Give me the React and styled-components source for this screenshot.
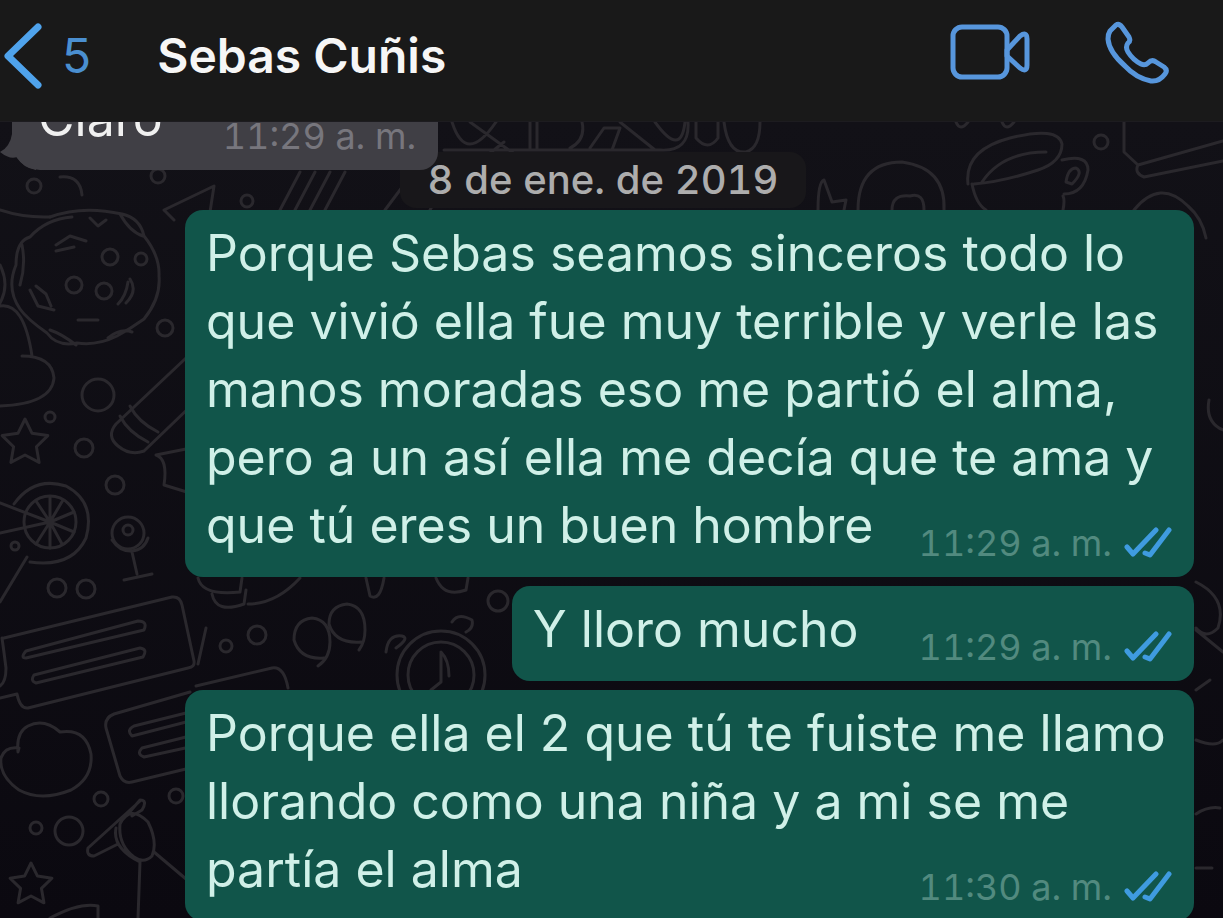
import React from "react";
import styled, { createGlobalStyle } from "styled-components";

const Global = createGlobalStyle`
  * { box-sizing: border-box; }
  html, body { margin: 0; background: #0d0b11; }
  body { font-family: Inter, "Liberation Sans", sans-serif; color: #fff; }
`;

const Screen = styled.div`
  height: 100vh;
  display: flex;
  flex-direction: column;
  overflow: hidden;
`;

const Header = styled.header`
  position: relative;
  z-index: 2;
  flex: none;
  height: 122px;
  padding: 0 54px 10px 4px;
  display: flex;
  align-items: center;
  background: #191919;
  border-bottom: 1px solid #1d1c20;
`;

const HeaderButton = styled.button`
  display: flex;
  align-items: center;
  gap: 20px;
  padding: 0;
  border: 0;
  background: none;
  color: #4a8fd0;
  font: inherit;
  font-size: 48px;
  line-height: 68px;
  cursor: pointer;

  svg { display: block; }
`;

const Title = styled.h1`
  flex: 1;
  margin: 0 0 0 66px;
  font-size: 48px;
  font-weight: 600;
  line-height: 68px;
  color: #f6f6f6;
`;

const Actions = styled.div`
  display: flex;
  gap: 74px;
  padding-bottom: 6px;
`;

const Chat = styled.main`
  position: relative;
  flex: 1;
  min-height: 0;
  background: linear-gradient(#121117, #0b0910);
`;

const Wallpaper = styled.svg`
  position: absolute;
  inset: 0;
  width: 100%;
  height: 100%;
  fill: none;
  stroke: #2a282d;
  stroke-width: 3;
  stroke-linecap: round;
  stroke-linejoin: round;
`;

const Messages = styled.div`
  position: relative;
  display: flex;
  flex-direction: column;
  gap: 9px;
  padding: 0 29px 0 12px;
`;

const Bubble = styled.article`
  position: relative;
  display: grid;
  grid-template-columns: auto auto;
  column-gap: 60px;
  justify-content: space-between;
  padding: 9px 22px 14px ${(p) => (p.$incoming ? "26px" : "21px")};
  border-radius: ${(p) => (p.$incoming ? "18px 18px 18px 28px" : "18px")};
  background: ${(p) => (p.$incoming ? "#403f45" : "#11554a")};
  align-self: ${(p) => (p.$incoming ? "flex-start" : p.$long ? "stretch" : "flex-end")};
  margin-left: ${(p) => (p.$long ? "173px" : "0")};
  margin-top: ${(p) => (p.$incoming ? "-47px" : "0")};
`;

const Text = styled.p`
  grid-area: ${(p) => (p.$long ? "1 / 1 / 2 / 3" : "1 / 1")};
  margin: 0 0 4px;
  font-size: 50px;
  line-height: 68px;
  white-space: nowrap;
  color: ${(p) => (p.$incoming ? "#f0f0f0" : "#d0f0e8")};
`;

const Meta = styled.div`
  grid-area: 1 / 2;
  align-self: end;
  justify-self: end;
  display: flex;
  align-items: center;
  gap: 12px;
  font-size: 36px;
  font-variant-numeric: tabular-nums;
  line-height: 40px;
  color: ${(p) => (p.$incoming ? "#77767d" : "#528a7f")};
`;

const Tail = styled.svg`
  position: absolute;
  left: -12px;
  bottom: 0;
  fill: #403f45;
`;

const DateLabel = styled.time`
  align-self: center;
  margin: -27px 0 -7px;
  padding: 0 28px;
  border-radius: 16px;
  background: #18171a;
  font-size: 40px;
  font-weight: 500;
  font-variant-numeric: tabular-nums;
  line-height: 56px;
  color: #adadad;
`;

const ChevronIcon = () => (
  <svg width="38" height="68" viewBox="0 0 38 68" fill="none" stroke="#4fa3ec" strokeWidth="7" strokeLinecap="round" strokeLinejoin="round" aria-hidden="true">
    <path d="M34 5 4 34l30 29" />
  </svg>
);

const VideoIcon = () => (
  <svg width="82" height="62" viewBox="0 0 82 62" fill="none" stroke="#5796dc" strokeWidth="5" strokeLinejoin="round" aria-hidden="true">
    <rect x="4" y="5" width="54" height="50" rx="9" />
    <path d="M58 28 71 14q7-5 7 3v26q0 8-7 3L58 34z" />
  </svg>
);

const PhoneIcon = () => (
  <svg width="64" height="64" viewBox="0 0 64 64" fill="none" stroke="#5796dc" strokeWidth="5" strokeLinejoin="round" aria-hidden="true">
    <path d="M5 10 11 4q3-2 6 2l7 10q2 4-1 6-3 4 0 9 5 8 13 12 4 2 7-1 4-4 8-1l8 5q4 3 1 7-6 8-14 7-15-3-26-15Q4 31 3 18 3 13 5 10Z" />
  </svg>
);

const Ticks = () => (
  <svg width="48" height="32" viewBox="0 0 48 32" fill="none" stroke="#3f9be0" strokeWidth="5" strokeLinecap="round" strokeLinejoin="round" role="img" aria-label="Leído">
    <path d="M3 20l6 7L32 3M21 26l5 2L45 3" />
  </svg>
);

const Star = ({ x, y, r }) => {
  const pts = Array.from({ length: 10 }, (_, i) => {
    const a = (Math.PI * i) / 5 - Math.PI / 2;
    const k = i % 2 ? r / 2 : r;
    return `${x + k * Math.cos(a)},${y + k * Math.sin(a)}`;
  });
  return <polygon points={pts.join(" ")} />;
};

const dots = [
  [34, 186, 7], [158, 176, 7], [247, 201, 6], [165, 328, 8], [50, 417, 5], [84, 448, 9], [115, 485, 9],
  [98, 395, 16], [57, 588, 9], [86, 589, 9], [101, 799, 7], [36, 828, 6], [69, 831, 14], [176, 796, 7],
  [226, 646, 6], [257, 635, 9], [498, 601, 10], [1101, 142, 7], [74, 285, 8], [110, 257, 8], [104, 291, 8],
  [141, 259, 6], [128, 533, 16], [128, 530, 5], [15, 546, 4],
];

const Doodles = () => (
  <Wallpaper viewBox="0 122 1223 796" preserveAspectRatio="xMidYMid slice" aria-hidden="true">
    {dots.map(([x, y, r]) => <circle key={`${x}-${y}`} cx={x} cy={y} r={r} />)}
    <Star x={25} y={443} r={24} />
    <Star x={31} y={885} r={22} />
    {/* cookie */}
    <path d="M50 217q32-12 72-3 18 4 22 22 16 20 15 40 2 22-15 43-14 10-27 17-20 10-40 7-20 4-30-10-20-14-27-24-14-20-4-44 0-24 14-28 16-18 42-20M22 245q4 20-2 40M50 330q12 4 26 15M108 338q12-10 24-6M120 214q10 18 23 22M56 245l14-9 16 5M56 251l18-4M30 290l8 16 16 4M36 286l10 8 5 12M130 279q8 12-4 24M118 304q8-8 10-22M78 320h20M90 218l8 8 8-6" />
    <path d="M0 210q24 8 50 7M60 177q20-2 22 18M0 265q10 20 0 38M0 306q24-4 32 50M22 356q30 0 32 22-2 26-54 28" />
    {/* wheel */}
    <circle cx="50" cy="522" r="26" />
    <path d="M14 504q20-28 52-18 30 16 20 52-14 30-56 24M0 503l50 19-50 11M50 522V497M50 522l13-22M50 522l24-10M50 522l24 10M50 522l12 22M50 522v26M50 522l-14 22M50 522l-14-21M27 557 0 602" />
    {/* glass */}
    <path d="M112 540q8 12 20 11 12-1 16-13M132 552l5 22M124 580l28-6" />
    {/* bottle */}
    <path d="M186 358 116 424q-10 12 2 22 12 10 26 5l50-48M120 416q8 16 28 26M130 406q8 16 28 26M156 455q12 4 8 30l26 8M156 455l30-6" />
    {/* letters */}
    <path d="M4 638 172 597q8-1 10 8l12 56q1 6-6 7L28 708q-8 1-11-14L0 698M2 638q2 14 4 30 0 14-6 18M26 651l112-30q10 0 6 9L26 658q-6 0 0-7M34 675l106-27q8 1 3 9L36 683q-6-2-2-8" />
    <path d="M190 692l-76 22q-10 4-8 14l14 48q4 8 12 6l58-14M190 712l-56 14q-8 4-2 10l58-15M190 736l-48 12q-6 6 2 9l46-10" />
    {/* cloud */}
    <path d="M18 752q-2-20 10-26 16-8 32 6 26-4 31 22 2 24-20 36-30 12-52 0-20-14-18-32 4-12 18-10Z" />
    {/* mixer */}
    <path d="M140 801 88 848q-2 8 6 8l24-12M120 824q10-20 28-2 10 20 4 34-8 8-18 1-16-12-14-33M116 828q-4 20 24 34l-2 56M128 814l12-14q8 0 2 10l-10 6M154 852l32 27M50 918q30-16 48-12v12" />
    {/* pencils and triangle beside the first bubble */}
    <path d="M300 172l-20 38M315 172l-20 38M330 172l-20 38M345 172l-20 38M164 210l50-24-4 26M164 210l10 10M385 210l18-24M440 192l-10 18" />
    <path d="M452 122q14 44 44 0M470 122l50 36M484 158l20-16M530 122v28M537 122v28M444 150h216q30 2 28-28M570 148q16-8 12-26M590 148l14-20h16l-8 22M620 122l35 28M655 122q26 36 30 0M696 122v16q12 14 22 0v-16M724 122q4 32 22 30 14-4 14-30" />
    <path d="M858 210q0-48 44-48 44 6 42 48M892 210q0-16 18-14 14-4 14 14M818 210q0-28 6-30l8 22 14-2-2 10" />
    {/* cup */}
    <path d="M968 184q-4-34 42-46 48-12 52 6 0 18-24 26-36 12-64 14M982 182q20-30 64-30M972 184q4 20 14 26M1063 210q2-10 0-14M1062 160q26-6 26 10-4 24-24 24M1066 182q2-14 10-14 8 4-4 16ZM956 122q4 10 12 0M1002 122q4 10 12 0" />
    <path d="M1124 122v30l14 13 85-24M1138 165q-4 8 6 12l79-16M1134 210q26-32 54-4 14 12 18 32" />
    {/* strips between bubbles */}
    <path d="M198 578q4 18 42 14l2-14M212 594q4 20 32 10l2-14M248 604q28 0 52-26M366 578l4 18q10 6 14-18M436 578q8 20 30 12l2-12M206 628l-8 36M196 686l76-18q12-2 16 20M324 658q-24 2-30-18 0-20 18-22 18 2 18 24 0 16-12 24M361 642q-26 2-32-18 0-18 18-20 18 2 18 26 0 12-6 20M452 622q6-10 20-2 2 8-6 12M386 652q2-18 16-16 8 2-6 12" />
    <circle cx="441" cy="675" r="44" />
    <circle cx="441" cy="675" r="33" />
    <path d="M441 652v30l-10 8M441 652q8 8 8 24M1196 582q32 16 22 46-12 12-22 0M1196 630l27 22M1196 690l14-10M1196 740q20 8 27 0M1196 814q12-8 24-6M1196 868h16M1223 430q-18-8-14-30" />
  </Wallpaper>
);

const Message = ({ lines, time, incoming, long }) => (
  <Bubble $incoming={incoming} $long={long}>
    {incoming && (
      <Tail width="36" height="48" viewBox="0 0 36 48" aria-hidden="true">
        <path d="M12 0v12Q10 25 0 30q10 8 17 5 6 11 19 13V0Z" />
      </Tail>
    )}
    <Text $incoming={incoming} $long={long}>
      {lines.map((line, i) => (
        <React.Fragment key={line}>
          {i > 0 && <br />}
          {line}
        </React.Fragment>
      ))}
    </Text>
    <Meta $incoming={incoming}>
      <time>{time}</time>
      {!incoming && <Ticks />}
    </Meta>
  </Bubble>
);

export default function App() {
  return (
    <Screen>
      <Global />
      <Header>
        <HeaderButton type="button" aria-label="Volver, 5 chats sin leer">
          <ChevronIcon />
          <span>5</span>
        </HeaderButton>
        <Title>Sebas Cuñis</Title>
        <Actions>
          <HeaderButton type="button" aria-label="Videollamada"><VideoIcon /></HeaderButton>
          <HeaderButton type="button" aria-label="Llamar"><PhoneIcon /></HeaderButton>
        </Actions>
      </Header>
      <Chat>
        <Doodles />
        <Messages>
          <Message incoming lines={["Claro"]} time="11:29 a. m." />
          <DateLabel dateTime="2019-01-08">8 de ene. de 2019</DateLabel>
          <Message
            long
            time="11:29 a. m."
            lines={[
              "Porque Sebas seamos sinceros todo lo",
              "que vivió ella fue muy terrible y verle las",
              "manos moradas eso me partió el alma,",
              "pero a un así ella me decía que te ama y",
              "que tú eres un buen hombre",
            ]}
          />
          <Message lines={["Y lloro mucho"]} time="11:29 a. m." />
          <Message
            long
            time="11:30 a. m."
            lines={[
              "Porque ella el 2 que tú te fuiste me llamo",
              "llorando como una niña y a mi se me",
              "partía el alma",
            ]}
          />
        </Messages>
      </Chat>
    </Screen>
  );
}
